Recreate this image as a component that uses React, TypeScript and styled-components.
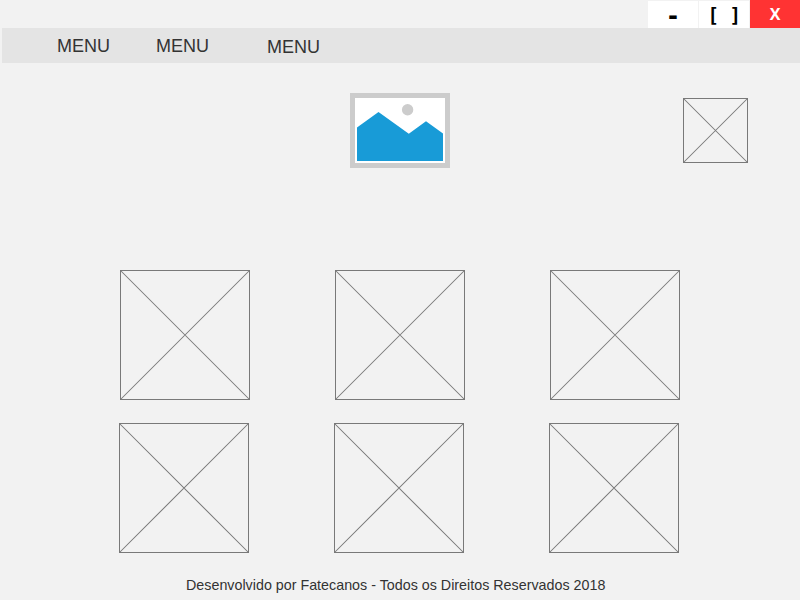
import React from "react";
import styled, { createGlobalStyle } from "styled-components";

const GlobalStyle = createGlobalStyle`
  * { box-sizing: border-box; }
  body { margin: 0; background: #fff; }
`;

const Window = styled.div`
  width: 800px;
  height: 600px;
  display: flex;
  flex-direction: column;
  overflow: hidden;
  background: #f2f2f2;
  color: #333;
  font-family: "Liberation Sans", Arial, sans-serif;
`;

const TitleBar = styled.header`
  display: flex;
  justify-content: flex-end;
  gap: 1px;
  height: 28px;
`;

const WindowButton = styled.button<{ $size: number; $spacing?: number; $drop?: number }>`
  width: 50px;
  height: 27px;
  margin-top: 1px;
  padding: ${(p) => p.$drop ?? 0}px 0 0;
  border: 0;
  display: flex;
  align-items: center;
  justify-content: center;
  white-space: pre;
  background: #fff;
  color: #000;
  font: bold ${(p) => p.$size}px / 28px "DejaVu Sans Mono", monospace;
  letter-spacing: ${(p) => p.$spacing ?? 0}px;
`;

const CloseButton = styled(WindowButton)`
  height: 28px;
  margin-top: 0;
  background: #ff3333;
  color: #fff;
  font-family: "Open Sans", sans-serif;
`;

const MenuBar = styled.nav`
  display: flex;
  height: 35px;
  margin-left: 2px;
  padding-left: 55px;
  background: #e4e4e4;
`;

const MenuItem = styled.a<{ $gap: number; $drop?: number }>`
  margin-right: ${(p) => p.$gap}px;
  padding-top: ${(p) => 8 + (p.$drop ?? 0)}px;
  width: 54px;
  font-size: 18px;
  line-height: 21px;
`;

const Banner = styled.section`
  display: grid;
  grid-template-columns: 350px 100px 233px 65px;
  align-items: start;
  height: 207px;
  padding-top: 30px;
`;

const Logo = styled.svg`
  display: block;
  grid-column: 2;
`;

const Avatar = styled.div`
  grid-column: 4;
  margin-top: 5px;
`;

const Gallery = styled.main`
  display: flex;
  flex-direction: column;
  gap: 23px;
`;

const GalleryRow = styled.div<{ $indent: number }>`
  display: flex;
  gap: 85px;
  padding-left: ${(p) => p.$indent}px;
`;

const Frame = styled.svg`
  display: block;
  fill: none;
  stroke: #797979;
  stroke-width: 1;
`;

const Footer = styled.footer`
  padding: 24px 0 0 186px;
  font-size: 14.3px;
  line-height: 17px;
  white-space: nowrap;
`;

function Placeholder({ size }: { size: number }) {
  const end = size - 0.5;
  return (
    <Frame width={size} height={size} viewBox={`0 0 ${size} ${size}`}>
      <rect x="0.5" y="0.5" width={size - 1} height={size - 1} />
      <path d={`M.5 .5L${end} ${end}M${end} .5L.5 ${end}`} strokeWidth="1.05" />
    </Frame>
  );
}

export default function App() {
  return (
    <Window>
      <GlobalStyle />
      <TitleBar>
        <WindowButton $size={24} $drop={3}>-</WindowButton>
        <WindowButton $size={19} $spacing={-0.5} $drop={1}>{"[ ]"}</WindowButton>
        <CloseButton $size={16}>X</CloseButton>
      </TitleBar>
      <MenuBar>
        <MenuItem $gap={45}>MENU</MenuItem>
        <MenuItem $gap={57}>MENU</MenuItem>
        <MenuItem $gap={0} $drop={1}>MENU</MenuItem>
      </MenuBar>
      <Banner>
        <Logo width="100" height="75" viewBox="0 0 100 75">
          <rect width="100" height="75" fill="#ccc" />
          <rect x="5" y="5" width="90" height="65" fill="#fff" />
          <circle cx="57.6" cy="16.8" r="5.7" fill="#ccc" />
          <path d="M7 34.5L28.5 19L58.8 40.8L76 28.3L93 40.5V68H7Z" fill="#189bd7" />
        </Logo>
        <Avatar>
          <Placeholder size={65} />
        </Avatar>
      </Banner>
      <Gallery>
        {[120, 119].map((indent) => (
          <GalleryRow key={indent} $indent={indent}>
            <Placeholder size={130} />
            <Placeholder size={130} />
            <Placeholder size={130} />
          </GalleryRow>
        ))}
      </Gallery>
      <Footer>Desenvolvido por Fatecanos - Todos os Direitos Reservados 2018</Footer>
    </Window>
  );
}
